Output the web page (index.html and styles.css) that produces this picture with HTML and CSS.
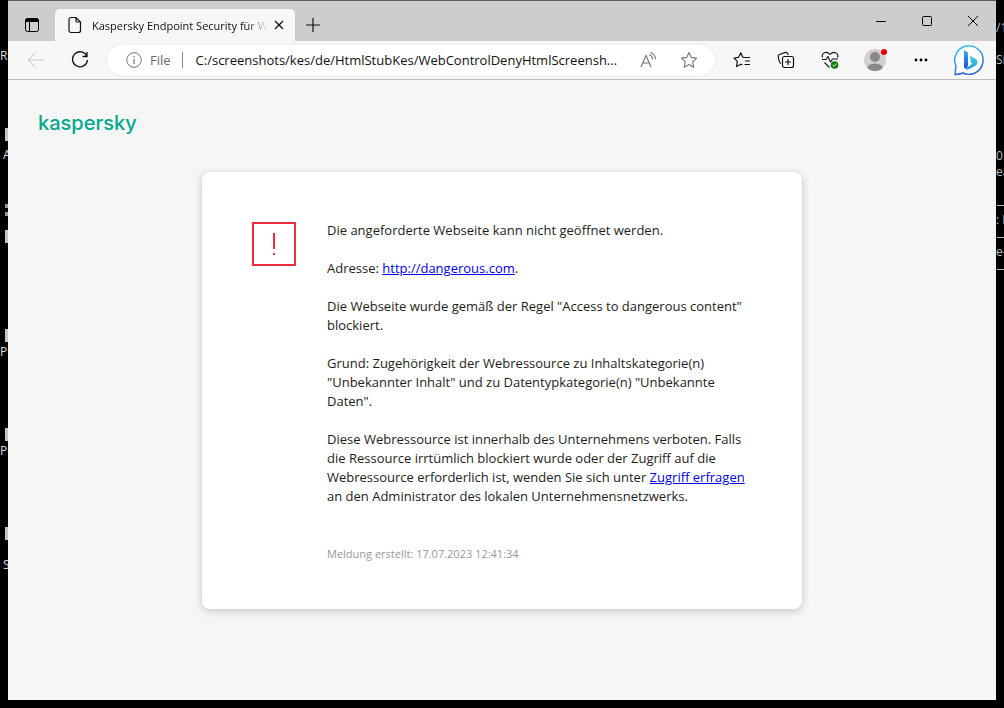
FILE: index.html
```html
<!DOCTYPE html>
<html lang="de">
	<head>
		<meta charset="utf-8">
		<title>Kaspersky Endpoint Security für Windows</title>
		<link rel="stylesheet" href="styles.css">
	</head>
	<body>
		<!-- pieces of the desktop behind the window -->
		<div class="desktop left" aria-hidden="true">
			<span class="label" style="top: 47px">Re</span>
			<i class="mark" style="top: 128px"></i>
			<span class="label inset" style="top: 146px">A</span>
			<i class="mark" style="top: 230px"></i>
			<i class="dot" style="top: 204px"></i>
			<i class="dot" style="top: 212px"></i>
			<i class="mark" style="top: 329px"></i>
			<span class="label" style="top: 343px">P</span>
			<i class="mark" style="top: 428px"></i>
			<span class="label" style="top: 442px">P</span>
			<i class="mark" style="top: 527px"></i>
			<span class="label inset" style="top: 556px">S</span>
		</div>
		<div class="desktop right" aria-hidden="true">
			<span class="label" style="top: 19px">/1</span>
			<span class="label" style="top: 51px">SK</span>
			<span class="label" style="top: 147px">0</span>
			<span class="label" style="top: 163px">ea</span>
			<i class="rule" style="top: 205px"></i>
			<span class="label" style="top: 211px">: I</span>
			<i class="rule" style="top: 237px"></i>
			<span class="label" style="top: 243px">e-</span>
			<i class="rule" style="top: 269px"></i>
		</div>

		<div class="window">
			<header class="titlebar">
				<button class="tabMenu" aria-label="Tabs">
					<svg width="16" height="16" viewBox="0 0 16 16"><rect x="1.5" y="1.5" width="13" height="13" rx="2" fill="none" stroke="#000"/><path d="M1.5 5V3a1.5 1.5 0 0 1 1.5-1.500h10a1.500 1.500 0 0 1 1.500 1.500v2z" fill="#000"/><path d="M5.500 5v9.500" stroke="#000"/></svg>
				</button>
				<div class="tab">
					<svg width="16" height="18" viewBox="0 0 16 18"><path d="M4 1.500h5l4.500 4.500v8.500a2 2 0 0 1-2 2H4a2 2 0 0 1-2-2v-11a2 2 0 0 1 2-2zM9 1.500V5a1 1 0 0 0 1 1h3.500" fill="none" stroke="#111" stroke-width="1.200"/></svg>
					<span class="tabTitle">Kaspersky Endpoint Security für Windows</span>
					<button class="tabClose" aria-label="Tab schließen">
						<svg width="10" height="10" viewBox="0 0 10 10"><path d="M1 1l8 8M9 1L1 9" stroke="#111" stroke-width="1.300"/></svg>
					</button>
				</div>
				<button class="newTab" aria-label="Neuer Tab">
					<svg width="14" height="14" viewBox="0 0 14 14"><path d="M7 0v14M0 7h14" stroke="#111" stroke-width="1.200"/></svg>
				</button>
				<div class="windowControls">
					<button aria-label="Minimieren"><svg width="10" height="10" viewBox="0 0 10 10"><path d="M0 5.500h10" stroke="#000"/></svg></button>
					<button aria-label="Maximieren"><svg width="10" height="10" viewBox="0 0 10 10"><rect x=".5" y=".5" width="9" height="9" rx="1" fill="none" stroke="#000"/></svg></button>
					<button aria-label="Schließen"><svg width="10" height="10" viewBox="0 0 10 10"><path d="M0 0l10 10M10 0L0 10" stroke="#000"/></svg></button>
				</div>
			</header>

			<nav class="toolbar">
				<button aria-label="Zurück">
					<svg width="18" height="16" viewBox="0 0 18 16"><path d="M17 8H1.500M8 1L1.500 8L8 15" fill="none" stroke="#ccc" stroke-width="1.100"/></svg>
				</button>
				<button aria-label="Aktualisieren">
					<svg width="18" height="18" viewBox="0 0 18 18"><path d="M16 5.500A7.500 7.500 0 1 0 16.500 9M16 1v4.500h-4.500" fill="none" stroke="#111" stroke-width="1.300"/></svg>
				</button>
				<div class="address">
					<svg width="16" height="16" viewBox="0 0 16 16"><circle cx="8" cy="8" r="7.300" fill="none" stroke="#767676"/><path d="M8 7v5M8 4v1.400" stroke="#767676" stroke-width="1.200"/></svg>
					<label for="url">File</label>
					<input id="url" type="text" value="C:/screenshots/kes/de/HtmlStubKes/WebControlDenyHtmlScreensh...">
					<button aria-label="Laut vorlesen">
						<svg width="18" height="16" viewBox="0 0 18 16"><path d="M1 15L6 3.500L11 15M2.800 11h6.500M9.500 2.500q3 1.500 3 5M10.500 .5q5 2 5 7" fill="none" stroke="#767676" stroke-width="1.100"/></svg>
					</button>
					<button aria-label="Favorit">
						<svg width="18" height="18" viewBox="0 0 18 18"><path d="M9 1.500l2.300 4.900 5.300.7-3.900 3.700 1 5.400L9 13.600l-4.700 2.600 1-5.400L1.400 7.100l5.300-.7z" fill="none" stroke="#767676" stroke-linejoin="round" stroke-width="1.100"/></svg>
					</button>
				</div>
				<button aria-label="Favoriten">
					<svg width="18" height="18" viewBox="0 0 18 18"><path d="M10 6.500H17M12 10H17M11.500 13.500H17M10 6.500L7.800 1.800L5.600 6.300L1 7L4.300 10.400L3.500 15.500L7.800 13.200L9.500 14" fill="none" stroke="#111" stroke-width="1.200" stroke-linejoin="round"/></svg>
				</button>
				<button aria-label="Sammlungen">
					<svg width="18" height="18" viewBox="0 0 18 18"><path d="M4 12.500C2.500 12 1.500 7.500 1.200 5.500Q1 4 2.500 3.500L8.500 1.400Q10 1 10.700 2.500L11.200 4" fill="none" stroke="#111" stroke-width="1.200"/><rect x="5.500" y="5.500" width="11" height="11" rx="2" fill="none" stroke="#111" stroke-width="1.200"/><path d="M11 8v6M8 11h6" stroke="#111" stroke-width="1.200"/></svg>
				</button>
				<button aria-label="Browser-Essentials">
					<svg width="18" height="18" viewBox="0 0 18 18"><path d="M1.500 6.500C0 2 5.500-.5 9 3.500C12.500-.5 18 2 16.500 6.500M1 8.500h4l2-3 2.500 5.500 2-3h5.500M3.500 11.500l5 5" fill="none" stroke="#111" stroke-width="1.100" stroke-linejoin="round"/><circle cx="13.500" cy="14" r="3.800" fill="#107c10"/><path d="M11.700 14l1.300 1.300 2.300-2.600" fill="none" stroke="#fff"/></svg>
				</button>
				<button class="profile" aria-label="Profil">
					<svg width="24" height="24" viewBox="0 0 24 24"><defs><clipPath id="face"><circle cx="12" cy="12" r="11"/></clipPath></defs><circle cx="12" cy="12" r="11" fill="#d2d0ce"/><g fill="#8a8886" clip-path="url(#face)"><circle cx="12" cy="9" r="5"/><ellipse cx="12" cy="21" rx="8" ry="5.500"/></g><circle cx="21" cy="4" r="3" fill="#e60000"/></svg>
				</button>
				<button class="more" aria-label="Einstellungen und mehr">
					<svg width="14" height="4" viewBox="0 0 14 4"><circle cx="2" cy="2" r="1.400"/><circle cx="7" cy="2" r="1.400"/><circle cx="12" cy="2" r="1.400"/></svg>
				</button>
				<button class="bing" aria-label="Bing">
					<svg width="32" height="32" viewBox="0 0 32 32"><defs><linearGradient id="bubble" x1="0" y1="0" x2=".4" y2="1"><stop offset="0" stop-color="#35c4f2"/><stop offset="1" stop-color="#2559d9"/></linearGradient><linearGradient id="stem" x1="0" y1="0" x2="0" y2="1"><stop offset="0" stop-color="#35aef5"/><stop offset="1" stop-color="#174ad8"/></linearGradient><linearGradient id="bowl" x1="0" y1="1" x2="1" y2="0"><stop offset="0" stop-color="#2388ee"/><stop offset="1" stop-color="#37dcd4"/></linearGradient></defs><path d="M2 30.500L3 22A14.200 14.200 0 1 1 10 29Q6 30.500 2 30.500z" fill="#fff" stroke="url(#bubble)" stroke-width="1.400"/><path d="M11 6.500l3 1.200q1 .5 1 1.500v12l-1.500 4q-2.500-.5-2.500-3z" fill="url(#stem)"/><path d="M17 12l5 2.500q3 1.500 2.500 4.500-.5 2-2.500 3l-6 3q-2 1-3.500 0l7-5.500-1.500-1z" fill="url(#bowl)"/></svg>
				</button>
			</nav>

			<main class="page">
				<div class="logo">kaspersky</div>
				<section class="card">
					<svg class="warning" width="44" height="44" viewBox="0 0 44 44"><rect x="1" y="1" width="42" height="42" fill="none" stroke="#eb2d3f" stroke-width="2"/><path d="M22 11v16M22 31v2" stroke="#eb2d3f" stroke-width="2"/></svg>
					<div class="message">
						<p>Die angeforderte Webseite kann nicht geöffnet werden.</p>
						<p>Adresse: <a href="#">http://dangerous.com</a>.</p>
						<p>Die Webseite wurde gemäß der Regel "Access to dangerous content" blockiert.</p>
						<p>Grund: Zugehörigkeit der Webressource zu Inhaltskategorie(n) "Unbekannter Inhalt" und zu Datentypkategorie(n) "Unbekannte Daten".</p>
						<p>Diese Webressource ist innerhalb des Unternehmens verboten. Falls die Ressource irrtümlich blockiert wurde oder der Zugriff auf die Webressource erforderlich ist, wenden Sie sich unter <a href="#">Zugriff erfragen</a> an den Administrator des lokalen Unternehmensnetzwerks.</p>
						<p class="created">Meldung erstellt: 17.07.2023 12:41:34</p>
					</div>
				</section>
			</main>
		</div>
	</body>
</html>
```

FILE: styles.css
```css
* {
	box-sizing: border-box;
}

body {
	margin: 0;
	height: 100vh;
	padding: 0 8px 8px;
	overflow: hidden;
	background: #000;
	color: #1d1d1b;
	font-family: "Open Sans", "Noto Sans", sans-serif;
	font-size: 13px;
}

button {
	display: flex;
	align-items: center;
	justify-content: center;
	flex: none;
	padding: 0;
	border: 0;
	background: none;
}

svg {
	display: block;
	flex: none;
}

.desktop {
	position: absolute;
	top: 0;
	width: 8px;
	height: 100%;
	overflow: hidden;
	color: #ddd;
	font-size: 12px;
	line-height: 18px;
	white-space: nowrap;
}

.left {
	left: 0;
}

.right {
	right: 0;
	color: #bbb;
}

.desktop .label {
	position: absolute;
	left: 0;
}

.desktop .inset {
	left: 3px;
}

.mark {
	position: absolute;
	left: 5px;
	width: 3px;
	height: 13px;
	background: #c8c6c4;
}

.dot {
	position: absolute;
	left: 5px;
	width: 3px;
	height: 4px;
	background: #8aa0a4;
}

.rule {
	position: absolute;
	left: 1px;
	width: 7px;
	height: 1px;
	background: #bbb;
}

.window {
	position: relative;
	display: flex;
	flex-direction: column;
	height: 100%;
	background: #f6f6f6;
}

/* title bar */
.titlebar {
	display: flex;
	align-items: flex-end;
	height: 41px;
	border-top: 1px solid #5f5b5d;
	background: #cdcdcd;
}

.tabMenu {
	width: 47px;
	height: 32px;
}

.tab {
	display: flex;
	align-items: center;
	width: 240px;
	height: 32px;
	padding: 0 10px 0 12px;
	border-radius: 5px 5px 0 0;
	background: #f7f7f7;
}

.tabTitle {
	flex: 1;
	min-width: 0;
	margin: 0 3px 0 9px;
	overflow: hidden;
	font-size: 11px;
	color: #111;
	white-space: nowrap;
	-webkit-mask-image: linear-gradient(to right, #000 155px, transparent 175px);
	mask-image: linear-gradient(to right, #000 155px, transparent 175px);
}

.tabClose {
	width: 12px;
	height: 20px;
}

.newTab {
	width: 36px;
	height: 32px;
}

.windowControls {
	display: flex;
	align-self: flex-start;
	margin-left: auto;
}

.windowControls button {
	width: 46px;
	height: 40px;
}

/* toolbar */
.toolbar {
	display: flex;
	align-items: center;
	height: 39px;
	padding: 0 3px 0 6px;
	border-bottom: 1px solid #bdbdbd;
	background: #f7f7f7;
}

.toolbar > button {
	width: 44px;
	height: 36px;
}

.address {
	display: flex;
	flex: 1;
	align-items: center;
	height: 30px;
	margin: 0 5px;
	padding: 0 6px 0 19px;
	border-radius: 15px;
	background: #fff;
	box-shadow: 0 0 4px rgba(0, 0, 0, 0.06);
}

.address label {
	margin-left: 8px;
	padding-right: 11px;
	border-right: 1px solid #8a8a8a;
	color: #6b6b6b;
	font-size: 13px;
	line-height: 16px;
}

.address input {
	flex: 1;
	min-width: 0;
	padding: 0 0 0 13px;
	border: 0;
	outline: 0;
	background: none;
	color: #111;
	font: inherit;
	text-overflow: ellipsis;
}

.address button {
	width: 40px;
	height: 30px;
}

.toolbar .profile,
.toolbar .more {
	width: 46px;
}

.toolbar .bing {
	width: 49px;
}

/* blocked page */
.page {
	flex: 1;
	padding: 0 30px;
}

.logo {
	padding: 28px 0 34px;
	color: #00a88e;
	font-family: Inter, sans-serif;
	font-size: 20px;
	font-weight: 500;
	line-height: 30px;
}

.card {
	display: flex;
	gap: 31px;
	max-width: 600px;
	margin: 0 auto;
	padding: 49px 48px 46px 50px;
	border-radius: 8px;
	background: #fff;
	box-shadow: 0 2px 8px rgba(0, 0, 0, 0.2);
}

.warning {
	margin-top: 1px;
}

.message {
	flex: 1;
	min-width: 0;
	line-height: 19px;
}

.message p {
	margin: 0 0 19px;
}

.message a {
	color: #00e;
}

.message .created {
	margin: 38px 0 0;
	color: #999;
	font-size: 11px;
}
```
